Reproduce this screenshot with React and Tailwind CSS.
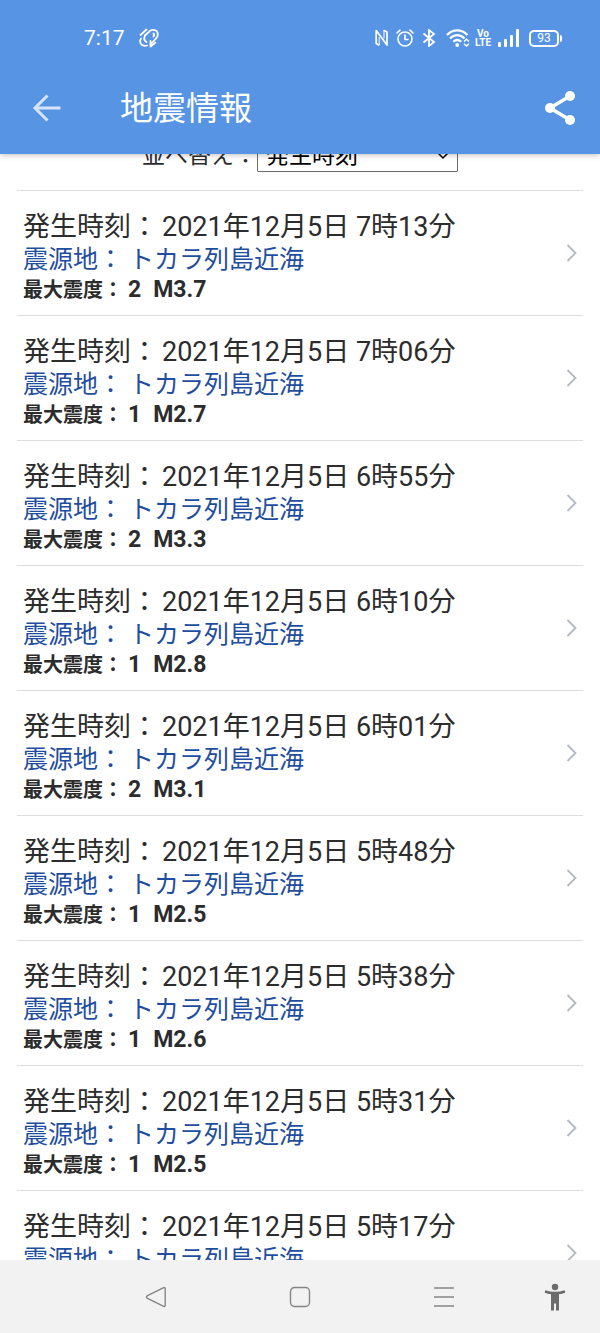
import React, { useState } from 'react'

const quakes = [
  { time: '2021年12月5日 7時13分', place: 'トカラ列島近海', intensity: 2, magnitude: 'M3.7' },
  { time: '2021年12月5日 7時06分', place: 'トカラ列島近海', intensity: 1, magnitude: 'M2.7' },
  { time: '2021年12月5日 6時55分', place: 'トカラ列島近海', intensity: 2, magnitude: 'M3.3' },
  { time: '2021年12月5日 6時10分', place: 'トカラ列島近海', intensity: 1, magnitude: 'M2.8' },
  { time: '2021年12月5日 6時01分', place: 'トカラ列島近海', intensity: 2, magnitude: 'M3.1' },
  { time: '2021年12月5日 5時48分', place: 'トカラ列島近海', intensity: 1, magnitude: 'M2.5' },
  { time: '2021年12月5日 5時38分', place: 'トカラ列島近海', intensity: 1, magnitude: 'M2.6' },
  { time: '2021年12月5日 5時31分', place: 'トカラ列島近海', intensity: 1, magnitude: 'M2.5' },
  { time: '2021年12月5日 5時17分', place: 'トカラ列島近海', intensity: 1, magnitude: 'M2.5' },
]

// Status bar with clock and phone indicators
const StatusBar = () => {
  return (
    <div className="flex h-[76px] items-center pl-[84px] pr-[38px] text-white">
      <span className="text-[21px] leading-6">7:17</span>
      <svg className="ml-[13px]" width="22" height="22" viewBox="0 0 22 22" fill="none" stroke="currentColor" strokeWidth="1.800" strokeLinecap="round" strokeLinejoin="round">
        <path d="M2.500 8 8.500 2.500" />
        <path d="M7 8.500 12 3.800Q16 1.500 19 4.500 21 8.500 18 11.500L12.500 17.500" />
        <path d="M15.500 6.500Q17 8 15.500 9.500" />
        <path d="M3 11.500Q.8 15.500 4 18 7 19.500 9 18.500" />
        <path d="M7 8.500Q5 13 8.500 15" />
        <path d="M12.500 14V19.500L17.500 15.500" />
      </svg>

      <div className="ml-auto flex items-center">
        {/* NFC */}
        <svg width="14" height="18" viewBox="0 0 14 18" fill="none" stroke="currentColor" strokeWidth="1.700" strokeLinejoin="round">
          <path d="M4 16.300 1.200 14.500V1.500L12 16V3L8.500 1.200" />
          <path d="M4.200 8V16.300" strokeWidth="1" />
          <path d="M9 1.500V9.500" strokeWidth="1" />
        </svg>
        {/* Alarm */}
        <svg className="ml-[7px]" width="18" height="18" viewBox="0 0 18 18" fill="none" stroke="currentColor" strokeWidth="1.600" strokeLinecap="round">
          <circle cx="9" cy="10" r="7" />
          <path d="M9 6v4.500h3M1 4l3-2.800M17 4l-3-2.800" />
        </svg>
        {/* Bluetooth */}
        <svg className="ml-[8px]" width="14" height="18" viewBox="0 0 14 18" fill="none" stroke="currentColor" strokeWidth="1.800">
          <path d="m1.500 4.500 10.500 8.500L7 17V1l5 4L1.500 13.500" />
        </svg>
        {/* Wi-Fi */}
        <svg className="ml-[10px]" width="24" height="18" viewBox="0 0 24 18" fill="none" stroke="currentColor" strokeWidth="2.200">
          <path d="M1 6C7-.3 15.500-.3 21.500 6" />
          <path d="M4 9.500c4.500-4.500 10-4.500 14.500 0" />
          <path d="M7.300 12.800c2.500-2.300 5.400-2.300 7.900 0" />
          <circle cx="11.200" cy="16" r="1.900" fill="currentColor" stroke="none" />
          <path d="m18 12.500 2.500-2.300 2.500 2.300M18 14.700l2.500 2.300 2.500-2.300" strokeWidth="1.400" />
        </svg>
        <span className="ml-[6px] flex w-[14px] flex-col items-center font-['Liberation_Sans_Narrow',Roboto,sans-serif] text-[10px] font-bold leading-[9px]">
          <span>Vo</span>
          <span>LTE</span>
        </span>
        {/* Signal */}
        <svg className="ml-[8px]" width="23" height="18" viewBox="0 0 23 18" fill="currentColor">
          <rect x="0" y="13" width="3" height="5" rx="1" />
          <rect x="6" y="10" width="3" height="8" rx="1" />
          <rect x="12" y="6" width="3" height="12" rx="1" />
          <rect x="18" y="0" width="3" height="18" rx="1" />
        </svg>
        {/* Battery */}
        <span className="ml-[8px] flex h-[17px] w-[30px] items-center justify-center rounded-[5px] border-2 border-white text-[12px] leading-3">
          93
        </span>
        <span className="ml-px h-[7px] w-[2px] rounded-r bg-white" />
      </div>
    </div>
  )
}

const Header = () => {
  return (
    <header className="relative z-10 shrink-0 bg-[#5894e4] shadow-[0_1px_6px_rgba(0,0,0,0.25)]">
      <StatusBar />
      <div className="flex h-[78px] items-center pb-[14px] pl-[32px] pr-[24px] text-white">
        <button aria-label="戻る" className="text-white/75">
          <svg width="30" height="30" viewBox="0 0 30 30" fill="none" stroke="currentColor" strokeWidth="3">
            <path d="M28.500 15H3.500M15.500 2.500 3 15l12.500 12.500" />
          </svg>
        </button>
        <h1 className="ml-[58px] pt-[2px] text-[33px] leading-10">地震情報</h1>
        <button aria-label="共有" className="ml-auto">
          <svg width="32" height="34" viewBox="0 0 32 34" fill="currentColor">
            <path d="M26 5 6 17l20 12" fill="none" stroke="currentColor" strokeWidth="3.500" />
            <circle cx="26" cy="5" r="5" />
            <circle cx="6" cy="17" r="5" />
            <circle cx="26" cy="29" r="5" />
          </svg>
        </button>
      </div>
    </header>
  )
}

// One earthquake in the list
const QuakeRow = ({ quake }) => {
  return (
    <li className="border-b border-[#dcdcdc]">
      <a href="#" className="flex items-center justify-between px-[6px]">
        <div className="pb-[10px] pt-[18px]">
          <p className="flex gap-1 text-[27px] leading-9">
            <span>発生時刻：</span>
            <span>{quake.time}</span>
          </p>
          <p className="flex gap-[6px] text-[25px] leading-[30px] text-[#1f4e9e]">
            <span>震源地：</span>
            <span>{quake.place}</span>
          </p>
          <p className="flex items-baseline text-[23px] font-bold leading-[30px]">
            <span className="text-[20px]">最大震度：</span>
            <span className="ml-[5px]">{quake.intensity}</span>
            <span className="ml-3">{quake.magnitude}</span>
          </p>
        </div>
        <svg width="11" height="18" viewBox="0 0 11 18" fill="none" stroke="#b4b8c2" strokeWidth="1.800">
          <path d="m1.500 1 8 8-8 8" />
        </svg>
      </a>
    </li>
  )
}

const NavBar = () => {
  return (
    <nav className="relative z-10 grid h-[73px] shrink-0 grid-cols-[84px_1fr_1fr_1fr_84px] items-center justify-items-center bg-[#f2f2f2] text-[#858585]">
      <button aria-label="戻る" className="col-start-2">
        <svg width="22" height="22" viewBox="0 0 22 22" fill="none" stroke="currentColor" strokeWidth="1.400" strokeLinejoin="round">
          <path d="M2.500 9.700 18.200 1.800q2-.8 2 1.200v16q0 2-2 1.200L2.500 12.300q-2.200-1.300 0-2.600Z" />
        </svg>
      </button>
      <button aria-label="ホーム">
        <svg width="22" height="22" viewBox="0 0 22 22" fill="none" stroke="currentColor" strokeWidth="1.400">
          <rect x="1.500" y="1.500" width="19" height="19" rx="4" />
        </svg>
      </button>
      <button aria-label="メニュー">
        <svg width="22" height="22" viewBox="0 0 22 22" stroke="currentColor" strokeWidth="1.500">
          <path d="M1 2h20M1 11h20M1 20h20" />
        </svg>
      </button>
      <button aria-label="ユーザー補助" className="pr-[6px] text-[#6c6c6c]">
        <svg width="22" height="28" viewBox="0 0 22 28" fill="currentColor">
          <circle cx="11" cy="4" r="3.200" />
          <path d="M1.300 7.300Q11 10.300 20.700 7.300l.6 2.500Q18 11 15 11.300V27.500h-3V20.500h-2v7H7V11.300Q4 11 .7 9.800Z" />
        </svg>
      </button>
    </nav>
  )
}

export default function App() {
  const [sort, setSort] = useState('time')

  return (
    <div className="flex h-screen flex-col overflow-hidden bg-white font-[Roboto,'Noto_Sans_CJK_JP',sans-serif] text-[#2c2c2c]">
      <Header />
      <main className="min-h-0 flex-1 overflow-hidden px-[17px]">
        <div className="-mt-[14px] mb-[18px] flex items-center justify-center text-[23px] leading-8">
          <label htmlFor="sort">並べ替え：</label>
          <div className="relative">
            <select
              id="sort"
              value={sort}
              onChange={(e) => setSort(e.target.value)}
              className="block h-8 w-[201px] appearance-none rounded-[1px] border border-[#6b6b6b] bg-white pl-[8px] leading-7 text-black"
            >
              <option value="time">発生時刻</option>
              <option value="intensity">最大震度</option>
            </select>
            <svg className="pointer-events-none absolute right-[9px] top-3" width="12" height="8" viewBox="0 0 12 8" fill="none" stroke="#000" strokeWidth="1.500">
              <path d="m1.500 1.500 4.500 4.500 4.500-4.500" />
            </svg>
          </div>
        </div>
        <ul className="border-t border-[#dcdcdc]">
          {quakes.map((quake) => (
            <QuakeRow key={quake.time} quake={quake} />
          ))}
        </ul>
      </main>
      <NavBar />
    </div>
  )
}
